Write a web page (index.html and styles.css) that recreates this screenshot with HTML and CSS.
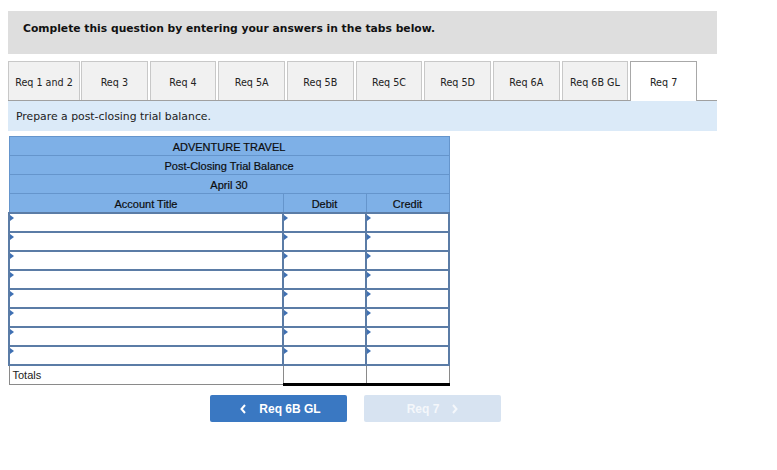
FILE: index.html
```html
<!DOCTYPE html>
<html>
<head>
<meta charset="utf-8">
<link rel="stylesheet" href="styles.css">
</head>
<body>
<div class="page">
  <div class="banner">Complete this question by entering your answers in the tabs below.</div>
  <div class="tabs">
    <div class="tab first">Req 1 and 2</div>
    <div class="tab">Req 3</div>
    <div class="tab">Req 4</div>
    <div class="tab">Req 5A</div>
    <div class="tab">Req 5B</div>
    <div class="tab">Req 5C</div>
    <div class="tab">Req 5D</div>
    <div class="tab">Req 6A</div>
    <div class="tab">Req 6B GL</div>
    <div class="tab active">Req 7</div>
  </div>
  <div class="instr">Prepare a post-closing trial balance.</div>
  <table class="tb">
    <colgroup><col class="c1"><col class="c2"><col class="c3"></colgroup>
    <tr class="hd"><td colspan="3">ADVENTURE TRAVEL</td></tr>
    <tr class="hd"><td colspan="3">Post-Closing Trial Balance</td></tr>
    <tr class="hd"><td colspan="3">April 30</td></tr>
    <tr class="hd"><td>Account Title</td><td>Debit</td><td>Credit</td></tr>
    <tr class="in"><td><i></i></td><td><i></i></td><td><i></i></td></tr>
    <tr class="in"><td><i></i></td><td><i></i></td><td><i></i></td></tr>
    <tr class="in"><td><i></i></td><td><i></i></td><td><i></i></td></tr>
    <tr class="in"><td><i></i></td><td><i></i></td><td><i></i></td></tr>
    <tr class="in"><td><i></i></td><td><i></i></td><td><i></i></td></tr>
    <tr class="in"><td><i></i></td><td><i></i></td><td><i></i></td></tr>
    <tr class="in"><td><i></i></td><td><i></i></td><td><i></i></td></tr>
    <tr class="in"><td><i></i></td><td><i></i></td><td><i></i></td></tr>
    <tr class="tot"><td class="lbl">Totals</td><td class="num"></td><td class="num"></td></tr>
  </table>
  <div class="nav">
    <div class="btn prev"><svg class="chev" width="6" height="10" viewBox="0 0 6 10"><path d="M5 1 L1.5 5 L5 9" fill="none" stroke="currentColor" stroke-width="2"/></svg>Req 6B GL</div>
    <div class="btn next">Req 7<svg class="chev" width="6" height="10" viewBox="0 0 6 10"><path d="M1 1 L4.5 5 L1 9" fill="none" stroke="currentColor" stroke-width="2"/></svg></div>
  </div>
</div>
</body>
</html>
```
FILE: styles.css
```css
html, body { margin: 0; padding: 0; background: #fff; }
body { padding: 11px 8px 0 8px; font-family: "DejaVu Sans", Verdana, sans-serif; color: #000; }
.page { width: 709px; }
.banner {
  height: 43px; background: #dedede; box-sizing: border-box;
  padding: 11px 0 0 15px; font-weight: bold; font-size: 10.75px; color: #111;
}
.tabs {
  display: flex; margin-top: 7px; height: 39px; border-bottom: 1px solid #a0a0a0;
  gap: 2px;
}
.tab {
  box-sizing: border-box; width: 66.67px; height: 39px; background: #f1f1f1;
  border: 1px solid #c8c8c8; border-bottom: none; font-size: 9.6px; color: #222;
  display: flex; align-items: center; justify-content: center; padding-top: 2px;
}
.tab.first { width: 72px; margin-right: -1px; }
.tab.active { background: #fff; border-color: #a8a8a8; height: 40px; position: relative; z-index: 1; }
.instr {
  height: 30px; background: #dbeaf8; font-size: 10.85px; color: #222;
  box-sizing: border-box; padding: 9px 0 0 8px;
}
.tb {
  margin-top: 5px; border-collapse: collapse; width: 440px;
  font-family: "Liberation Sans", Arial, sans-serif; font-size: 11px;
  table-layout: fixed;
}
.c1 { width: 274px; } .c2 { width: 83px; } .c3 { width: 83px; }
.tb td { padding: 0; }
.hd td {
  background: #7eb0e7; border: 1px solid #6595cc; height: 17px; padding-top: 1px;
  text-align: center; color: #0d0d0d; -webkit-text-stroke: 0.2px #0d0d0d;
}
.in td {
  border: 2px solid #5b7ca6; height: 17px; background: #fff; position: relative;
}
.in i {
  position: absolute; left: 0; top: 1px; width: 0; height: 0;
  border-top: 3px solid transparent; border-bottom: 3px solid transparent;
  border-left: 4px solid #3f70b3;
}
.tot td { height: 18px; border: 1px solid #8a8a8a; }
.tot .lbl { padding-left: 3px; color: #222; }
.tot .num { border-top: 1px solid #000; border-bottom: 3px solid #000; height: 15px; }
.nav { display: flex; gap: 17px; margin: 9px 0 0 202px; }
.btn {
  width: 137px; height: 27px; box-sizing: border-box; border-radius: 2px;
  display: flex; align-items: center; justify-content: center;
  font-family: "Liberation Sans", Arial, sans-serif; font-weight: bold; font-size: 12px; color: #fff;
}
.btn.prev { background: #3a78c2; padding-left: 4px; }
.btn.next { background: #d7e3f1; color: #f4f7fb; }
.prev .chev { margin-right: 13px; }
.next .chev { margin-left: 13px; }
```
